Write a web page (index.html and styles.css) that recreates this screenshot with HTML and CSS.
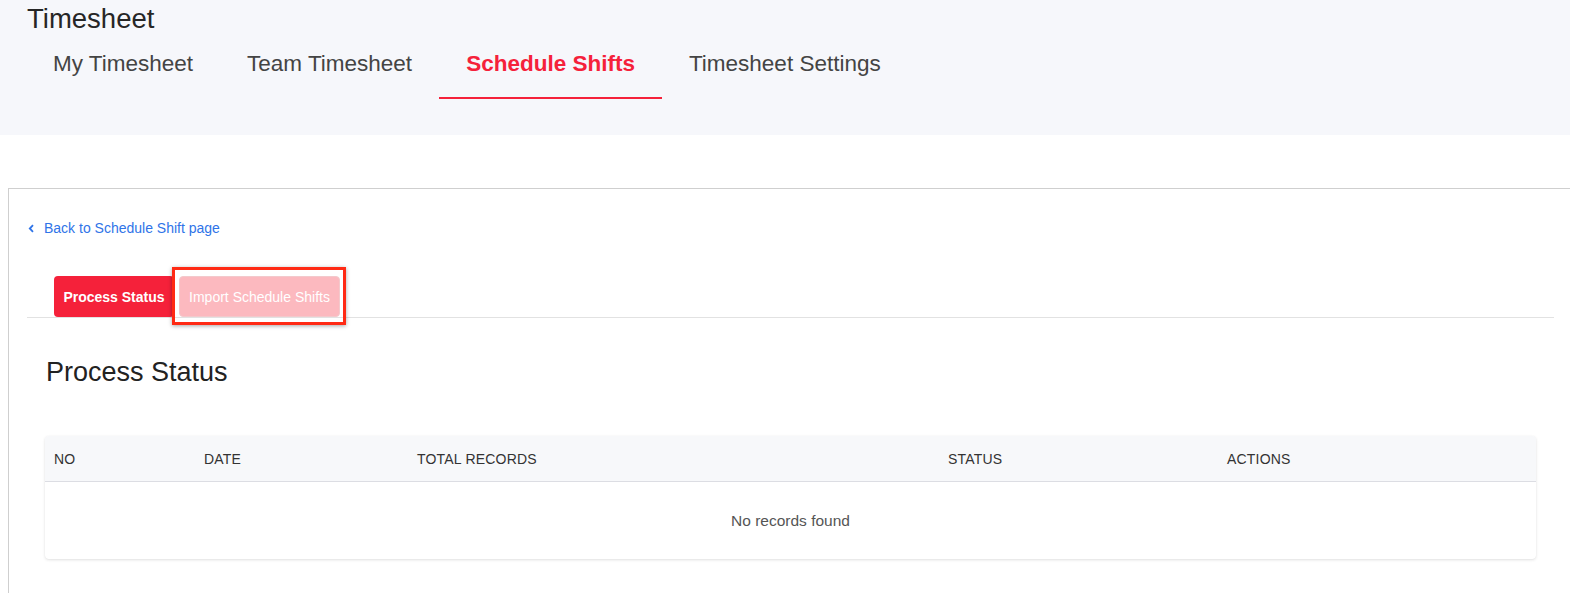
FILE: index.html
```html
<!DOCTYPE html>
<html>
<head>
<meta charset="utf-8">
<link rel="stylesheet" href="styles.css">
</head>
<body>
<header class="top">
  <div class="app-title">Timesheet</div>
  <nav class="nav">
    <a class="nav-tab">My Timesheet</a>
    <a class="nav-tab">Team Timesheet</a>
    <a class="nav-tab active">Schedule Shifts</a>
    <a class="nav-tab">Timesheet Settings</a>
  </nav>
</header>
<main class="card">
  <a class="back">
    <svg class="chev" width="7" height="9" viewBox="0 0 7 9"><path d="M5 1.2 L1.8 4.5 L5 7.8" fill="none" stroke="#2f74e8" stroke-width="1.8"/></svg>
    <span>Back to Schedule Shift page</span>
  </a>
  <div class="subtabs">
    <button class="btn btn-active">Process Status</button>
    <span class="hl-wrap">
      <button class="btn btn-light">Import Schedule Shifts</button>
      <span class="hl"></span>
    </span>
  </div>
  <section class="section">
    <h2 class="section-title">Process Status</h2>
    <div class="table">
      <div class="thead">
        <div class="th">NO</div>
        <div class="th">DATE</div>
        <div class="th">TOTAL RECORDS</div>
        <div class="th">STATUS</div>
        <div class="th">ACTIONS</div>
      </div>
      <div class="empty">No records found</div>
    </div>
  </section>
</main>
</body>
</html>
```

FILE: styles.css
```css
html, body {
  margin: 0;
  padding: 0;
  background: #ffffff;
  font-family: "Liberation Sans", Arial, sans-serif;
  overflow: hidden;
}

.top {
  background: #f6f7fb;
  padding: 3px 0 0 26px;
  height: 132px;
}

.app-title {
  font-size: 27.5px;
  line-height: 32px;
  color: #262626;
  padding-left: 1px;
}

.nav {
  display: flex;
}

.nav-tab {
  display: block;
  padding: 16px 27px 0 27px;
  height: 46px;
  font-size: 22.5px;
  line-height: 26px;
  color: #444;
  border-bottom: 2px solid transparent;
}

.nav-tab.active {
  color: #f5213a;
  font-weight: bold;
  border-bottom-color: #f5213a;
}

.card {
  margin: 53px -2px 0 8px;
  border: 1px solid #cfcfcf;
  border-right: none;
  padding: 29px 18px 30px 18px;
  height: 345px;
}

.back {
  display: flex;
  align-items: center;
  gap: 9px;
  color: #2f74e8;
  font-size: 14px;
  line-height: 20px;
  padding-left: 1px;
}

.chev {
  display: block;
}

.subtabs {
  display: flex;
  align-items: flex-end;
  gap: 5px;
  margin-top: 38px;
  padding-left: 27px;
  border-bottom: 1px solid #e2e2e2;
}

.btn {
  border: none;
  height: 41px;
  font-family: "Liberation Sans", Arial, sans-serif;
  font-size: 14px;
  color: #fff;
  padding: 0;
  display: block;
}

.btn-active {
  background: #f5213a;
  font-weight: bold;
  width: 120px;
  border-radius: 4px;
}

.btn-light {
  background: #fcb9bf;
  width: 161px;
  border: 1px solid #f3c9cc;
  border-radius: 4px;
}

.hl-wrap {
  position: relative;
  display: block;
}

.hl {
  position: absolute;
  left: -7px;
  right: -6px;
  top: -9px;
  bottom: -8px;
  border: 3px solid #ff2a14;
  box-shadow: 0 1px 4px rgba(0,0,0,0.35);
  pointer-events: none;
}

.section {
  padding: 37px 18px 0 18px;
}

.section-title {
  margin: 0;
  font-weight: normal;
  font-size: 27px;
  line-height: 34px;
  color: #222;
  padding-left: 1px;
}

.table {
  margin-top: 47px;
  border-radius: 4px;
  box-shadow: 0 1px 3px rgba(0,0,0,0.12), 0 0 1px rgba(0,0,0,0.06);
  overflow: hidden;
}

.thead {
  display: grid;
  grid-template-columns: 150px 213px 531px 279px 1fr;
  background: #f7f8fa;
  border-bottom: 1px solid #dcdde3;
  height: 45px;
  align-items: center;
}

.th {
  padding-left: 9px;
  font-size: 14px;
  color: #333;
  letter-spacing: 0.2px;
}

.empty {
  height: 77px;
  display: flex;
  align-items: center;
  justify-content: center;
  font-size: 15.5px;
  color: #555;
}
```
